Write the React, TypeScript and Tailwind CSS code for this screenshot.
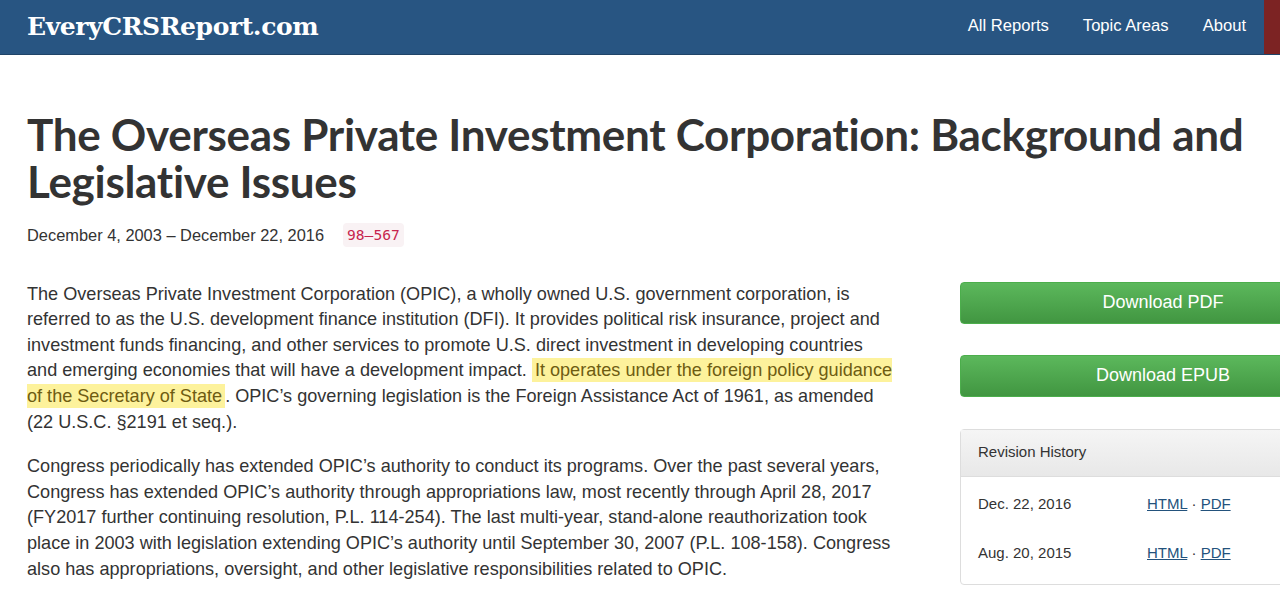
import React from "react";

const revisions = [
  { date: "Dec. 22, 2016" },
  { date: "Aug. 20, 2015" },
];

export default function App() {
  return (
    <div className="w-[1280px] h-[594px] overflow-hidden bg-white text-[#333] font-['Liberation_Sans',Arial,sans-serif]">
      {/* top bar */}
      <header className="flex h-[55px] bg-[#285582] border-b border-[#1f4468]">
        <div className="flex flex-1 items-center justify-between pl-[27px] pr-[18px]">
          <a className="font-['DejaVu_Serif',serif] font-bold text-[25px] tracking-[-0.4px] text-white">
            EveryCRSReport.com
          </a>
          <nav className="flex items-center gap-[34px] text-[16.6px] text-white -mt-[2px]">
            <a>All Reports</a>
            <a>Topic Areas</a>
            <a>About</a>
          </nav>
        </div>
        <div className="w-[16px] bg-[#7c2323]" />
      </header>

      <main className="pl-[27px] pt-[56px]">
        <h1 className="font-['Lato',sans-serif] font-bold text-[44px] leading-[47px] tracking-[-0.3px] text-[#333] w-[1240px]">
          The Overseas Private Investment Corporation: Background and Legislative Issues
        </h1>

        <div className="flex items-center mt-[18px] text-[16.4px]">
          <span>December 4, 2003 – December 22, 2016</span>
          <code className="ml-[19px] px-[4px] py-[1px] rounded bg-[#f9f2f4] text-[#c7254e] text-[14.6px] font-['DejaVu_Sans_Mono',monospace]">
            98–567
          </code>
        </div>

        <div className="flex mt-[34px]">
          <div className="w-[912px] shrink-0 text-[18.1px] leading-[25.6px]">
            <p>
              The Overseas Private Investment Corporation (OPIC), a wholly owned U.S. government corporation, is
              <br />
              referred to as the U.S. development finance institution (DFI). It provides political risk insurance, project and
              <br />
              investment funds financing, and other services to promote U.S. direct investment in developing countries
              <br />
              and emerging economies that will have a development impact.{" "}
              <mark className="bg-[#fdf29c] text-[#6e5c12] px-[3px] py-[2px]">
                It operates under the foreign policy guidance
                <br />
                of the Secretary of State
              </mark>
              . OPIC’s governing legislation is the Foreign Assistance Act of 1961, as amended
              <br />
              (22 U.S.C. §2191 et seq.).
            </p>
            <p className="mt-[19px]">
              Congress periodically has extended OPIC’s authority to conduct its programs. Over the past several years,
              <br />
              Congress has extended OPIC’s authority through appropriations law, most recently through April 28, 2017
              <br />
              (FY2017 further continuing resolution, P.L. 114-254). The last multi-year, stand-alone reauthorization took
              <br />
              place in 2003 with legislation extending OPIC’s authority until September 30, 2007 (P.L. 108-158). Congress
              <br />
              also has appropriations, oversight, and other legislative responsibilities related to OPIC.
            </p>
          </div>

          <aside className="ml-[21px] w-[406px] shrink-0">
            <a className="flex h-[42px] items-center justify-center rounded-[4px] border border-[#4cae4c] bg-gradient-to-b from-[#5cb85c] to-[#419641] text-white text-[18px]">
              Download PDF
            </a>
            <a className="flex h-[42px] mt-[31px] items-center justify-center rounded-[4px] border border-[#4cae4c] bg-gradient-to-b from-[#5cb85c] to-[#419641] text-white text-[18px]">
              Download EPUB
            </a>

            <div className="mt-[32px] rounded-[4px] border border-[#ddd]">
              <div className="h-[47px] flex items-center px-[17px] border-b border-[#ddd] bg-gradient-to-b from-[#f5f5f5] to-[#e8e8e8] text-[15px]">
                Revision History
              </div>
              <div className="px-[17px] pt-[17px] pb-[20px] text-[15px]">
                {revisions.map((r, i) => (
                  <div key={r.date} className={`flex h-[21px] items-center ${i > 0 ? "mt-[28px]" : ""}`}>
                    <span className="w-[169px]">{r.date}</span>
                    <span>
                      <a className="text-[#23527c] underline">HTML</a>
                      {" · "}
                      <a className="text-[#23527c] underline">PDF</a>
                    </span>
                  </div>
                ))}
              </div>
            </div>
          </aside>
        </div>
      </main>
    </div>
  );
}
